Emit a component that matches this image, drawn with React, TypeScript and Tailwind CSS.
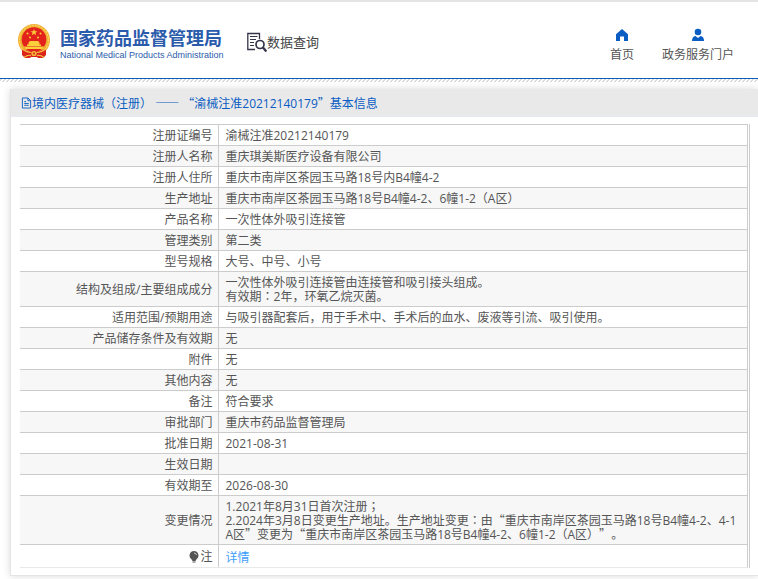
import type { ReactNode } from "react";

const rows = [
  { label: "注册证编号", lines: ["渝械注准20212140179"] },
  { label: "注册人名称", lines: ["重庆琪美斯医疗设备有限公司"] },
  { label: "注册人住所", lines: ["重庆市南岸区茶园玉马路18号内B4幢4-2"] },
  { label: "生产地址", lines: ["重庆市南岸区茶园玉马路18号B4幢4-2、6幢1-2（A区）"] },
  { label: "产品名称", lines: ["一次性体外吸引连接管"] },
  { label: "管理类别", lines: ["第二类"] },
  { label: "型号规格", lines: ["大号、中号、小号"] },
  { label: "结构及组成/主要组成成分", lines: ["一次性体外吸引连接管由连接管和吸引接头组成。", "有效期：2年，环氧乙烷灭菌。"] },
  { label: "适用范围/预期用途", lines: ["与吸引器配套后，用于手术中、手术后的血水、废液等引流、吸引使用。"] },
  { label: "产品储存条件及有效期", lines: ["无"] },
  { label: "附件", lines: ["无"] },
  { label: "其他内容", lines: ["无"] },
  { label: "备注", lines: ["符合要求"] },
  { label: "审批部门", lines: ["重庆市药品监督管理局"] },
  { label: "批准日期", lines: ["2021-08-31"] },
  { label: "生效日期", lines: [""] },
  { label: "有效期至", lines: ["2026-08-30"] },
  {
    label: "变更情况",
    lines: [
      "1.2021年8月31日首次注册；",
      "2.2024年3月8日变更生产地址。生产地址变更：由“重庆市南岸区茶园玉马路18号B4幢4-2、4-1 A区”变更为“重庆市南岸区茶园玉马路18号B4幢4-2、6幢1-2（A区）”。",
    ],
  },
];

// quotes and dashes take the full-width Chinese forms, colons the centred ones
const Zh = ({ text }: { text: string }) => (
  <>
    {text.split(/([“”—]+|[：；])/).map((part, i) => {
      if (i % 2 === 0) return part;
      return /[：；]/.test(part) ? (
        <span key={i} lang="zh-TW" className="font-['Noto_Sans_CJK_TC',sans-serif] leading-[8px]">{part}</span>
      ) : (
        <span key={i} className="font-['Noto_Sans_CJK_SC',sans-serif] leading-[8px]">{part}</span>
      );
    })}
  </>
);

const Emblem = () => (
  <svg viewBox="0 0 32 35" className="h-[35px] w-8 shrink-0" aria-hidden="true">
    <path d="M4 22v9l3 3 5-1h8l5 1 3-3v-9z" fill="#d9251c" />
    <circle cx="16" cy="16" r="16" fill="#f0b034" />
    <circle cx="16" cy="16" r="14.5" fill="none" stroke="#fbd55f" strokeWidth="1.2" strokeDasharray="2 1" />
    <circle cx="16" cy="15.5" r="12.3" fill="#e3231b" />
    <path d="m16 5 .9 2.300h2.500l-2 1.500.7 2.400L16 9.800l-2.100 1.400.7-2.400-2-1.500h2.500z" fill="#fbd03c" />
    <g fill="#fbd03c">
      <circle cx="9.5" cy="9.500" r="1" />
      <circle cx="22.5" cy="9.500" r="1" />
      <circle cx="12" cy="13.500" r="1" />
      <circle cx="20" cy="13.500" r="1" />
      <path d="M10.500 18.500 12 17h8l1.500 1.500v2H23V22H9v-1.500h1.500zM6 22.500h20l-1.500 2.500h-17z" />
    </g>
    <path d="M4 25q12 4 24 0v5l-4 4h-4l-2-2h-4l-2 2H8l-4-4z" fill="#dc241b" />
    <path d="M4 25q5 3.500 9.500 3.500M28 25q-5 3.500-9.500 3.500M6 33.500q4-3 7-2M26 33.500q-4-3-7-2" fill="none" stroke="#f7c545" strokeWidth="1.100" />
    <circle cx="16" cy="29.500" r="2.600" fill="#f3b73c" />
    <circle cx="16" cy="29.500" r="1" fill="#dc241b" />
  </svg>
);

const SearchDocIcon = () => (
  <svg viewBox="0 0 20 20" className="size-5 shrink-0" fill="none" stroke="#34344a" aria-hidden="true">
    <path d="M12.500 7V1.500H.8v16H8" strokeWidth="1.300" />
    <path d="M3 4.500h7.500M3 7.500h6M3 10.500h4M3 13.500h4" strokeWidth="1.200" />
    <circle cx="13" cy="12.500" r="4" strokeWidth="1.700" />
    <path d="m16 15.500 3.300 4" strokeWidth="2.200" />
  </svg>
);

const NavLink = ({ icon, children }: { icon: ReactNode; children: ReactNode }) => (
  <a href="#" className="flex flex-col items-center gap-[3px] text-xs leading-5 text-[#555]">
    {icon}
    {children}
  </a>
);

const Header = () => {
  return (
    <header className="flex h-[79px] items-start border-b border-t-2 border-b-[#0a5fbf] border-t-[#e4e4e4] bg-white pl-[18px] pr-6">
      <div className="mt-[22px] flex items-start gap-[10px]">
        <Emblem />
        <div className="w-[162px] whitespace-nowrap text-[#2b5bab]">
          <h1 className="text-lg font-bold leading-7">国家药品监督管理局</h1>
          <p className="font-['Liberation_Sans',sans-serif] text-[9px] leading-[6px]">
            National Medical Products Administration
          </p>
        </div>
      </div>
      <div className="ml-[25px] mt-[30px] flex items-center whitespace-nowrap text-[13px] leading-5 text-[#444]">
        <SearchDocIcon />
        数据查询
      </div>
      <nav className="ml-auto mt-[26px] flex gap-7 whitespace-nowrap">
        <NavLink
          icon={
            <svg viewBox="0 0 14 14" className="size-[14px]" fill="#0a5dc2" aria-hidden="true">
              <path d="M7 1 1 6.200V13h4V8.500h4V13h4V6.200z" />
            </svg>
          }
        >
          首页
        </NavLink>
        <NavLink
          icon={
            <svg viewBox="0 0 14 14" className="size-[14px]" fill="#0a5dc2" aria-hidden="true">
              <circle cx="7" cy="4" r="3.300" />
              <path d="M1 13q0-4.500 3.500-5L7 10l2.500-2q3.500.5 3.500 5z" />
            </svg>
          }
        >
          政务服务门户
        </NavLink>
      </nav>
    </header>
  );
};

const DetailTable = () => {
  return (
    <table className="w-full border-collapse text-xs leading-[14px] text-[#555]">
      <tbody>
        {rows.map((row) => (
          <tr key={row.label} className="odd:bg-white even:bg-[#f7f7f7]">
            <th scope="row" className="w-[198px] border-y border-r border-[#ccc] pb-[2px] pr-[5px] pt-1 text-right font-normal">
              {row.label}
            </th>
            <td className="border border-[#ccc] pb-[2px] pl-[7px] pr-1 pt-1">
              {row.lines.map((line) => (
                <p key={line} className="min-h-[14px]">
                  <Zh text={line} />
                </p>
              ))}
            </td>
          </tr>
        ))}
        <tr>
          <th scope="row" className="border-b border-r border-[#ccc] border-b-[#e8e8e8] pb-[3px] pr-[5px] pt-[5px] font-normal">
            <span className="flex items-center justify-end gap-px">
              <svg viewBox="0 0 10 12" className="h-3 w-[10px]" fill="#555" aria-hidden="true">
                <path d="M5 0a4.500 4.500 0 0 0-2.500 8.200L3.500 10h3l1-1.800A4.500 4.500 0 0 0 5 0M3.500 10.500h3v1h-3z" />
                <path d="M5 2Q7 2 7.500 4" fill="none" stroke="#fff" strokeWidth=".7" />
              </svg>
              注
            </span>
          </th>
          <td className="border-b border-r border-[#ccc] border-b-[#e8e8e8] pb-[2px] pl-[7px] pr-1 pt-[6px]">
            <a href="#" className="text-[#409eff]">详情</a>
          </td>
        </tr>
      </tbody>
    </table>
  );
};

const App = () => {
  return (
    <div lang="zh-CN" className="overflow-hidden bg-white font-['Open_Sans','Noto_Sans_CJK_SC',sans-serif] [text-spacing-trim:space-all]">
      <Header />
      <div className="h-[3px] bg-[linear-gradient(135deg,#ddd_25%,#fff_25%_50%,#ddd_50%_75%,#fff_75%)] bg-[length:4px_4px]" />
      <main className="ml-[10px] mt-[7px] pb-1">
        <section className="border-b border-l border-[#e4e4e4] bg-white pb-[7px] shadow-[0_0_8px_rgba(0,0,0,0.15)]">
          <h2 className="flex h-7 items-center whitespace-pre border-b border-[#e6eaf5] bg-[#e9e9e9] pl-[10px] text-xs text-[#0a5dc2]">
            <svg viewBox="0 0 12 12" className="h-3 w-[11px]" fill="none" stroke="#0a5dc2" aria-hidden="true">
              <path d="M1.500.5h6l3 3v8h-9zM7.500.5v3h3M3.500 4.500h2M3.500 6.500h5M3.500 8.500h5" />
            </svg>
            <span className="pt-[2px]">
              <Zh text="境内医疗器械（注册） —— “渝械注准20212140179”基本信息" />
            </span>
          </h2>
          <div className="ml-[9px] mr-2 mt-[7px] border-r border-[#ccc] pr-px">
            <DetailTable />
          </div>
        </section>
      </main>
    </div>
  );
};

export default App;
